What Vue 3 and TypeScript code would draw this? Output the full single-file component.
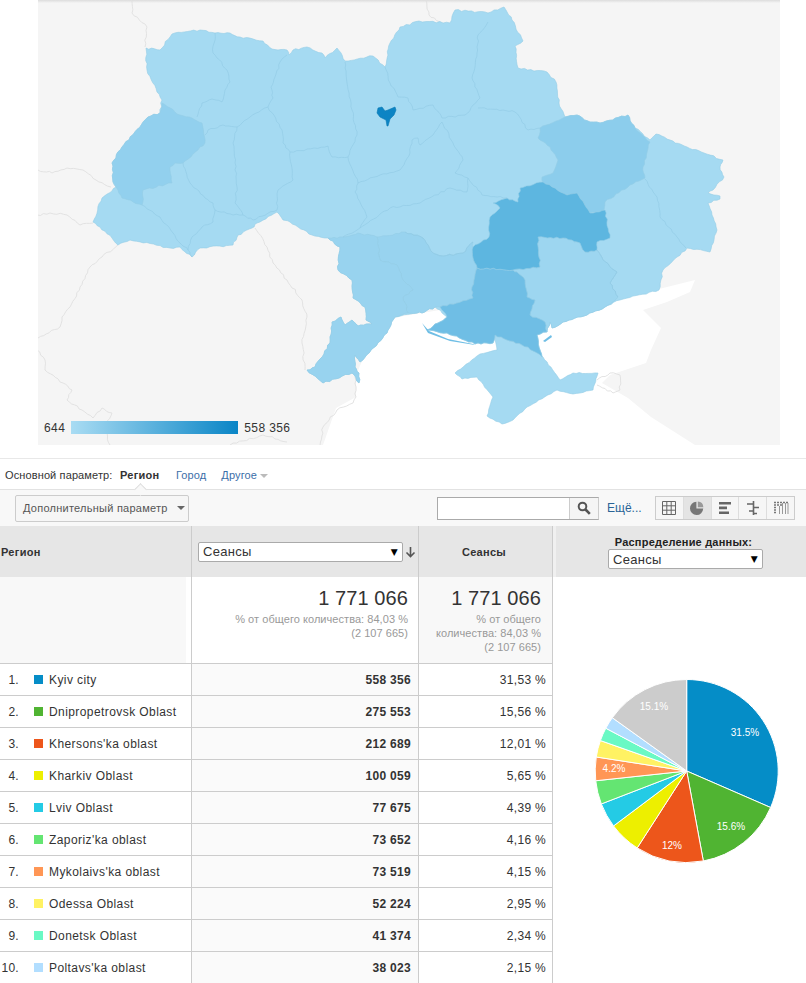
<script setup lang="ts">
type P = [number, number]

function noise(a: number, b: number): number {
  const s = Math.sin(a * 12.9898 + b * 78.233) * 43758.5453
  return (s - Math.floor(s)) * 2 - 1
}

function wiggle(pts: P[], closed: boolean, amp = 0.9): string {
  const list = closed ? [...pts, pts[0]] : pts
  let d = `M${list[0][0]} ${list[0][1]}`
  for (let i = 1; i < list.length; i++) {
    const p = list[i - 1]
    const q = list[i]
    const flip = p[0] > q[0] || (p[0] === q[0] && p[1] > q[1])
    const a = flip ? q : p
    const b = flip ? p : q
    const len = Math.hypot(b[0] - a[0], b[1] - a[1])
    const n = Math.min(14, Math.floor(len / 3.5))
    const mids: P[] = []
    for (let k = 1; k <= n; k++) {
      const t = k / (n + 1)
      const o = noise(a[0] + k * 3.1, b[1] + a[1] + k) * amp
      mids.push([
        +(a[0] + (b[0] - a[0]) * t - ((b[1] - a[1]) / len) * o).toFixed(1),
        +(a[1] + (b[1] - a[1]) * t + ((b[0] - a[0]) / len) * o).toFixed(1),
      ])
    }
    if (flip) mids.reverse()
    for (const m of mids) d += `L${m[0]} ${m[1]}`
    d += `L${q[0]} ${q[1]}`
  }
  return closed ? d + 'Z' : d
}

const outer: P[] = [[146,48],[160,50],[172,34],[200,30],[215,33],[230,33],[240,37],[263,41],[272,49],[287,50],[289,55],[293,50],[307,47],[322,53],[325,58],[337,48],[345,61],[373,56],[385,67],[390,43],[400,27],[419,21],[450,23],[455,10],[488,13],[504,7],[512,20],[523,41],[515,46],[518,68],[547,72],[556,82],[559,103],[565,117],[577,115],[590,122],[600,123],[628,115],[635,128],[650,140],[656,134],[670,140],[687,147],[704,153],[723,160],[720,167],[724,177],[713,190],[708,193],[720,196],[720,199],[708,203],[712,215],[717,230],[710,252],[687,248],[677,257],[663,270],[659,290],[620,300],[605,307],[587,315],[563,322],[552,328],[550,322],[547,332],[537,335],[542,357],[528,347],[507,340],[495,335],[493,343],[475,344],[447,333],[427,330],[438,323],[447,317],[435,307],[422,313],[417,313],[395,317],[387,333],[360,362],[355,355],[355,367],[359,373],[359,383],[352,373],[323,383],[307,370],[315,367],[330,343],[332,322],[341,317],[345,325],[352,320],[358,326],[372,324],[366,320],[365,307],[353,298],[352,280],[338,270],[340,247],[328,238],[312,235],[290,222],[283,220],[277,212],[257,223],[252,228],[238,235],[233,245],[200,248],[192,257],[180,247],[170,248],[130,240],[118,245],[112,238],[100,227],[93,222],[102,198],[116,187],[113,182],[112,163],[122,147],[148,117],[160,113],[162,100],[157,92],[147,70]]

const crimea: P[] = [[495,335],[497,350],[480,354],[455,373],[462,379],[477,377],[493,397],[487,416],[502,424],[513,420],[527,407],[557,390],[573,394],[593,390],[598,373],[573,373],[560,380],[543,357],[528,347],[507,340]]

const regions: { pts: P[]; fill: string }[] = [
  { fill: '#9dd6f0', pts: [[513,270],[540,267],[538,237],[563,238],[580,243],[585,252],[597,250],[603,260],[617,272],[610,283],[618,297],[605,307],[587,315],[563,322],[552,328],[550,322],[547,332],[545,322],[530,315],[535,300],[527,297],[525,280],[517,272]] },
  { fill: '#98d3ef', pts: [[377,237],[405,232],[423,238],[433,253],[443,256],[463,253],[473,242],[473,258],[477,268],[472,287],[473,298],[440,307],[435,307],[422,313],[417,313],[408,313],[403,297],[413,290],[403,280],[397,265],[380,260]] },
  { fill: '#98d3ef', pts: [[328,238],[343,237],[358,233],[377,237],[380,260],[397,265],[403,280],[413,290],[403,297],[408,313],[395,317],[387,333],[360,362],[355,355],[355,367],[359,373],[359,383],[352,373],[323,383],[307,370],[315,367],[330,343],[332,322],[341,317],[345,325],[352,320],[358,326],[372,324],[366,320],[365,307],[353,298],[352,280],[338,270],[340,247]] },
  { fill: '#92d0ee', pts: [[112,163],[113,182],[118,190],[122,198],[142,205],[143,190],[172,183],[170,167],[175,163],[183,163],[205,143],[202,123],[192,118],[180,115],[162,103],[160,113],[148,117],[122,147]] },
  { fill: '#8ccdec', pts: [[540,128],[565,117],[577,115],[590,122],[600,123],[628,115],[635,128],[650,142],[643,167],[645,178],[630,185],[605,202],[603,212],[590,213],[577,193],[567,195],[543,183],[542,177],[553,173],[558,160],[550,147],[538,138]] },
  { fill: '#6fbee5', pts: [[477,268],[472,287],[473,298],[440,307],[447,317],[438,323],[427,330],[447,333],[475,344],[493,343],[495,335],[507,340],[528,347],[542,357],[537,335],[547,332],[545,322],[530,315],[535,300],[527,297],[525,280],[517,272],[513,270]] },
  { fill: '#5db6e0', pts: [[543,182],[520,188],[518,202],[507,198],[493,203],[500,208],[490,217],[489,237],[473,247],[473,258],[477,268],[513,270],[540,267],[538,237],[563,238],[580,243],[585,252],[597,250],[597,242],[610,238],[605,210],[590,213],[577,193],[567,195]] },
]

const borders: P[][] = [
  [[215,33],[213,53],[227,70],[230,82],[225,90],[222,102],[212,99],[202,103],[197,117]],
  [[287,55],[280,62],[275,77],[271,87],[273,98],[268,107]],
  [[268,107],[250,117],[237,127],[223,125],[208,130],[205,135]],
  [[237,127],[233,143],[235,163],[237,187],[235,203],[243,215]],
  [[183,163],[190,183],[205,198],[213,203],[215,210],[233,215],[243,215]],
  [[215,210],[213,222],[202,227],[192,237],[188,250],[192,257]],
  [[142,205],[160,217],[173,233],[180,243],[188,250]],
  [[243,215],[253,220],[277,210]],
  [[268,107],[282,130],[283,143],[290,152],[293,180],[278,190],[277,210]],
  [[290,152],[328,146],[332,157],[348,157]],
  [[345,62],[347,83],[352,110],[357,135],[348,157],[358,183]],
  [[358,183],[355,192],[367,217],[360,228],[343,237]],
  [[358,183],[380,175],[400,170],[410,153],[412,140],[418,138],[420,145],[433,135],[442,122]],
  [[385,67],[390,83],[398,97],[408,98],[413,110],[433,105],[442,118]],
  [[488,22],[478,35],[477,53],[472,78],[480,98],[465,115],[442,118]],
  [[478,108],[503,110],[515,112],[528,130],[540,128]],
  [[442,122],[453,143],[463,160],[455,173],[468,178],[482,195],[497,197],[507,198]],
  [[360,228],[390,208],[420,203],[450,188],[467,192],[468,178]],
  [[405,232],[423,238],[433,253],[443,256],[463,253],[473,242]],
  [[597,250],[603,260],[617,272],[610,283],[618,297]],
  [[645,179],[657,197],[660,217],[677,237],[686,248]],
]

const neighbours: P[][] = [
  [[132,0],[132,13],[147,27],[145,47]],
  [[426,0],[429,15],[442,23]],
  [[38,170],[52,173],[67,168],[83,170],[96,180],[111,187]],
  [[37,215],[50,213],[67,215],[80,225],[93,223]],
  [[118,245],[102,257],[90,267],[80,287],[70,307],[62,317],[60,327],[38,338]],
  [[37,350],[45,360],[45,370],[63,383],[72,390],[67,400],[82,410],[93,418],[102,408],[112,413],[105,427],[110,445]],
  [[255,228],[267,247],[273,263],[287,280],[302,300],[307,317],[302,343],[305,370]],
  [[355,377],[356,397],[353,403],[337,410],[323,427],[320,445]],
  [[230,445],[263,435],[287,442]],
  [[597,380],[610,373],[620,375],[620,390],[613,393],[597,385]],
]

const seaPath = 'M323 445L336 408L356 397L356 375L380 320L500 300L600 290L659 289L695 280L690 292L667 302L643 310L661 328L651 350L646 363L610 375L602 383L628 398L651 417L695 445Z'
const kyivPath = 'M377 113L378 108L382 107L385 111L388 110L395 107L396 110L394 115L390 119L388 126L387 126L386 120L380 117Z'
const outerPath = wiggle(outer, true)
const crimeaPath = wiggle(crimea, true, 0.5)
const regionPaths = regions.map((r) => ({ fill: r.fill, d: wiggle(r.pts, true) }))
const borderPaths = borders.map((b) => wiggle(b, false))
const neighbourPaths = neighbours.map((b) => wiggle(b, false, 1))

const rows = [
  { name: 'Kyiv city', value: '558 356', pct: '31,53 %', share: 31.53, color: '#058dc7' },
  { name: 'Dnipropetrovsk Oblast', value: '275 553', pct: '15,56 %', share: 15.56, color: '#50b432' },
  { name: "Khersons'ka oblast", value: '212 689', pct: '12,01 %', share: 12.01, color: '#ed561b' },
  { name: 'Kharkiv Oblast', value: '100 059', pct: '5,65 %', share: 5.65, color: '#edef00' },
  { name: 'Lviv Oblast', value: '77 675', pct: '4,39 %', share: 4.39, color: '#24cbe5' },
  { name: "Zaporiz'ka oblast", value: '73 652', pct: '4,16 %', share: 4.16, color: '#64e572' },
  { name: "Mykolaivs'ka oblast", value: '73 519', pct: '4,15 %', share: 4.15, color: '#ff9655' },
  { name: 'Odessa Oblast', value: '52 224', pct: '2,95 %', share: 2.95, color: '#fff263' },
  { name: 'Donetsk Oblast', value: '41 374', pct: '2,34 %', share: 2.34, color: '#6af9c4' },
  { name: "Poltavs'ka oblast", value: '38 023', pct: '2,15 %', share: 2.15, color: '#b2deff' },
]

const cx = 133.7
const cy = 194
const radius = 91.5
let acc = 0
const slices = [...rows.map((r) => ({ share: r.share, color: r.color })), { share: 15.11, color: '#cccccc' }].map((s) => {
  const a0 = (acc / 100) * Math.PI * 2 - Math.PI / 2
  acc += s.share
  const a1 = (acc / 100) * Math.PI * 2 - Math.PI / 2
  const large = s.share > 50 ? 1 : 0
  const d = `M${cx} ${cy}L${(cx + radius * Math.cos(a0)).toFixed(2)} ${(cy + radius * Math.sin(a0)).toFixed(2)}A${radius} ${radius} 0 ${large} 1 ${(cx + radius * Math.cos(a1)).toFixed(2)} ${(cy + radius * Math.sin(a1)).toFixed(2)}Z`
  return { d, color: s.color }
})
const pieLabels = [
  { t: '31.5%', x: 192, y: 159 },
  { t: '15.6%', x: 178, y: 253 },
  { t: '12%', x: 119, y: 272 },
  { t: '4.2%', x: 61, y: 195 },
  { t: '15.1%', x: 101, y: 133 },
]
</script>

<template>
  <div class="page">
    <div class="map">
      <svg class="map-svg" viewBox="38 0 742 445" width="742" height="445">
        <defs>
          <linearGradient id="topShade" x1="0" y1="0" x2="0" y2="1">
            <stop offset="0" stop-color="#dcdcdc" />
            <stop offset="1" stop-color="#f5f5f5" />
          </linearGradient>
        </defs>
        <rect x="38" y="0" width="742" height="445" fill="#f5f5f5" />
        <rect x="38" y="0" width="742" height="3" fill="url(#topShade)" />
        <path :d="seaPath" fill="#ffffff" />
        <path v-for="(d, i) in neighbourPaths" :key="'n' + i" :d="d" class="neighbour" />
        <path :d="outerPath" fill="#a5daf2" class="edge" />
        <path :d="crimeaPath" fill="#a5daf2" class="edge" />
        <path v-for="(r, i) in regionPaths" :key="'r' + i" :d="r.d" :fill="r.fill" class="edge" />
        <path v-for="(d, i) in borderPaths" :key="'b' + i" :d="d" class="inner" />
        <path d="M422 323L429 331L448 339L473 344L475 345L450 341L428 333Z" fill="#6fbee5" />
        <path d="M543 341L551 335L552 337L545 342Z" fill="#6fbee5" />
        <path :d="kyivPath" fill="#0c84c4" stroke="#0a78b4" stroke-width="0.6" />
      </svg>
      <div class="legend">
        <span>644</span>
        <i class="legend-bar"></i>
        <span>558 356</span>
      </div>
    </div>

    <div class="tabs">
      <span class="tabs-label">Основной параметр:</span>
      <span class="tab-active">Регион</span>
      <a class="tab-link">Город</a>
      <a class="tab-link">Другое</a>
      <i class="tab-caret"></i>
    </div>

    <div class="toolbar">
      <div class="extra-btn">
        <span>Дополнительный параметр</span>
        <i class="btn-caret"></i>
      </div>
      <div class="tools">
        <div class="search">
          <div class="search-input"></div>
          <div class="search-btn">
            <svg width="14" height="14" viewBox="0 0 14 14">
              <circle cx="5.5" cy="5.5" r="3.8" fill="none" stroke="#555" stroke-width="2" />
              <path d="M8.5 8.5L12.8 12.8" stroke="#555" stroke-width="2.6" />
            </svg>
          </div>
        </div>
        <a class="more">Ещё...</a>
        <div class="views">
          <div class="view">
            <svg width="14" height="14" viewBox="0 0 14 14">
              <path d="M.5 .5H13.5V13.5H.5ZM.5 4.8H13.5M.5 9.2H13.5M4.8 .5V13.5M9.2 .5V13.5" fill="none" stroke="#666" />
            </svg>
          </div>
          <div class="view active">
            <svg width="14" height="14" viewBox="0 0 14 14">
              <path d="M6.4 .8V7.6H13.2A6.6 6.6 0 1 1 6.4 .8Z" fill="#777" />
              <path d="M7.8 .6A6 6 0 0 1 13.4 6.2H7.8Z" fill="#999" />
            </svg>
          </div>
          <div class="view">
            <svg width="14" height="14" viewBox="0 0 14 14">
              <path d="M1 1H13V3.6H1ZM1 5.6H9V8.2H1ZM1 10.4H11V13H1Z" fill="#666" />
            </svg>
          </div>
          <div class="view">
            <svg width="14" height="14" viewBox="0 0 14 14">
              <path d="M7.5 0V14" stroke="#666" stroke-width="1.6" />
              <path d="M1 3H7M7 6.5H13M3 10H7M7 12.5H11" stroke="#666" stroke-width="1.6" />
            </svg>
          </div>
          <div class="view">
            <svg width="16" height="14" viewBox="0 0 16 14">
              <path d="M1 1.5H15M1 4H9M1 6.5H4M1 9H4M1 11.5H4" stroke="#777" stroke-width="1.4" stroke-dasharray="2 1" />
              <path d="M6.5 5V13M9.5 2V13M12.5 2V13M15 2V13" stroke="#999" stroke-width="1" />
            </svg>
          </div>
        </div>
      </div>
    </div>

    <div class="report">
      <div class="table">
        <div class="row head">
          <div class="c1 head-title">Регион</div>
          <div class="c2 head-select">
            <div class="select wide"><span>Сеансы</span><b>▼</b></div>
            <svg width="11" height="12" viewBox="0 0 11 12" class="sort">
              <path d="M5.5 1V10.5M1.5 6.5L5.5 10.5L9.5 6.5" fill="none" stroke="#555" stroke-width="1.6" />
            </svg>
          </div>
          <div class="c3 head-metric">Сеансы</div>
        </div>
        <div class="row totals">
          <div class="c1 total-blank"></div>
          <div class="c2 total">
            <div class="big">1 771 066</div>
            <div class="sub">% от общего количества: 84,03 %<br />(2 107 665)</div>
          </div>
          <div class="c3 total shaded">
            <div class="big">1 771 066</div>
            <div class="sub">% от общего<br />количества: 84,03 %<br />(2 107 665)</div>
          </div>
        </div>
        <div v-for="(r, i) in rows" :key="r.name" class="row item">
          <div class="c1 name-cell">
            <span class="idx">{{ i + 1 }}.</span>
            <i class="swatch" :style="{ background: r.color }"></i>
            <span class="name">{{ r.name }}</span>
          </div>
          <div class="c2 val">{{ r.value }}</div>
          <div class="c3 pct">{{ r.pct }}</div>
        </div>
      </div>
      <div class="side">
        <div class="side-head">
          <div class="side-title">Распределение данных:</div>
          <div class="select side-select"><span>Сеансы</span><b>▼</b></div>
        </div>
        <svg class="pie" width="253" height="300" viewBox="0 0 253 300">
          <path v-for="(s, i) in slices" :key="i" :d="s.d" :fill="s.color" stroke="#fff" stroke-width="1" />
          <text v-for="l in pieLabels" :key="l.t" :x="l.x" :y="l.y" class="pie-label">{{ l.t }}</text>
        </svg>
      </div>
    </div>
  </div>
</template>

<style scoped>
.page {
  width: 806px;
  height: 983px;
  overflow: hidden;
  background: #fff;
  font-family: "Liberation Sans", Arial, sans-serif;
  color: #333;
}
.map {
  position: relative;
  height: 445px;
  padding-left: 38px;
}
.map-svg {
  display: block;
}
.neighbour {
  fill: none;
  stroke: #e0e0e0;
  stroke-width: 0.9;
  stroke-linejoin: round;
}
.edge {
  stroke: #94cce6;
  stroke-width: 0.6;
  stroke-linejoin: round;
}
.inner {
  fill: none;
  stroke: #90c9e4;
  stroke-width: 0.6;
  stroke-linejoin: round;
}
.legend {
  position: absolute;
  left: 44px;
  top: 421px;
  display: flex;
  align-items: center;
  height: 13px;
  font-size: 12px;
  color: #333;
  letter-spacing: 0.4px;
}
.legend-bar {
  width: 167px;
  height: 13px;
  margin: 0 6px;
  background: linear-gradient(90deg, #a9dcf3, #0a85c6);
}
.tabs {
  margin-top: 13px;
  padding: 2px 0 0 5px;
  box-sizing: border-box;
  height: 32px;
  border-top: 1px solid #e8e8e8;
  border-bottom: 1px solid #e2e2e2;
  display: flex;
  align-items: center;
  font-size: 11px;
  position: relative;
  letter-spacing: 0.12px;
}
.tabs-label {
  width: 115px;
}
.tab-active {
  font-weight: bold;
  width: 56px;
  letter-spacing: 0.25px;
}
.tab-active::after {
  content: "";
  position: absolute;
  left: 136px;
  bottom: -1px;
  width: 8px;
  height: 8px;
  transform: translateY(4px) rotate(45deg);
  background: #f8f8f8;
  border-left: 1px solid #ddd;
  border-top: 1px solid #ddd;
}
.tab-link {
  color: #3b6ea8;
}
.tab-link + .tab-link {
  margin-left: 15px;
}
.tab-caret {
  margin-left: 3px;
  margin-top: 1px;
  border-left: 4px solid transparent;
  border-right: 4px solid transparent;
  border-top: 4px solid #bbb;
}
.toolbar {
  height: 36px;
  background: #f8f8f8;
  display: flex;
  align-items: center;
  justify-content: space-between;
  padding: 0 11px 0 15px;
}
.extra-btn {
  width: 174px;
  height: 27px;
  box-sizing: border-box;
  border: 1px solid #ccc;
  border-radius: 2px;
  background: #f6f6f6;
  display: flex;
  align-items: center;
  padding-left: 7px;
  font-size: 11px;
  color: #555;
  letter-spacing: 0.25px;
}
.btn-caret {
  margin-left: 9px;
  border-left: 4px solid transparent;
  border-right: 4px solid transparent;
  border-top: 4px solid #666;
}
.tools {
  display: flex;
  align-items: center;
}
.search {
  display: flex;
  width: 162px;
  height: 23px;
  box-sizing: border-box;
  border: 1px solid #aaa;
  border-right-color: #ccc;
  background: #fff;
}
.search-input {
  flex: 1;
}
.search-btn {
  width: 28px;
  border-left: 1px solid #ccc;
  background: #f5f5f5;
  display: flex;
  align-items: center;
  justify-content: center;
}
.more {
  margin-left: 8px;
  width: 48px;
  font-size: 12px;
  color: #2a6496;
}
.views {
  display: flex;
  width: 140px;
  height: 24px;
  box-sizing: border-box;
  border: 1px solid #ccc;
  background: #f6f6f6;
}
.view {
  flex: 1;
  display: flex;
  align-items: center;
  justify-content: center;
  border-left: 1px solid #ddd;
}
.view:first-child {
  border-left: 0;
}
.view.active {
  background: #e4e4e4;
}
.report {
  display: flex;
}
.table {
  width: 553px;
  flex: none;
}
.row {
  display: flex;
}
.c1 {
  width: 192px;
  box-sizing: border-box;
  border-right: 1px solid #ccc;
}
.c2 {
  width: 227px;
  box-sizing: border-box;
  border-right: 1px solid #ccc;
}
.c3 {
  width: 134px;
  box-sizing: border-box;
  border-right: 1px solid #ccc;
}
.head {
  height: 51px;
  background: #e6e6e6;
  font-size: 11px;
  font-weight: bold;
  align-items: stretch;
}
.head-title {
  display: flex;
  align-items: center;
  padding-left: 1px;
  letter-spacing: 0.3px;
}
.head-select {
  display: flex;
  align-items: center;
  padding-left: 6px;
  gap: 2px;
}
.select {
  box-sizing: border-box;
  height: 20px;
  background: #fff;
  border: 1px solid #aaa;
  border-radius: 2px;
  display: flex;
  align-items: center;
  justify-content: space-between;
  padding: 0 4px;
  font-size: 13px;
  font-weight: normal;
  color: #333;
  letter-spacing: 0.3px;
}
.select b {
  font-size: 9px;
  font-weight: normal;
  color: #000;
  font-family: "DejaVu Sans", sans-serif;
}
.wide {
  width: 205px;
}
.head-metric {
  display: flex;
  align-items: center;
  justify-content: center;
  padding-right: 3px;
  letter-spacing: 0.3px;
}
.totals {
  height: 86px;
}
.total-blank {
  background: linear-gradient(90deg, #f8f8f8 0, #f8f8f8 186px, #fff 186px);
}
.total {
  text-align: right;
  padding: 11px 10px 0 0;
}
.shaded {
  background: #f8f8f8;
  padding-right: 11px;
}
.big {
  font-size: 20px;
  line-height: 21px;
  letter-spacing: 0.1px;
}
.sub {
  font-size: 11px;
  line-height: 14px;
  color: #999;
  margin-top: 3px;
  letter-spacing: 0.05px;
}
.item {
  height: 32px;
  font-size: 12px;
  box-sizing: border-box;
  border-top: 1px solid #ccc;
  letter-spacing: 0.3px;
}
.name-cell {
  display: flex;
  align-items: center;
}
.idx {
  width: 19px;
  text-align: right;
}
.swatch {
  margin-left: 15px;
  width: 9px;
  height: 9px;
  flex: none;
}
.name {
  margin-left: 6px;
  white-space: nowrap;
  letter-spacing: 0.42px;
}
.val {
  background: #fafafa;
  display: flex;
  align-items: center;
  justify-content: flex-end;
  padding-right: 7px;
  font-weight: bold;
}
.pct {
  display: flex;
  align-items: center;
  justify-content: flex-end;
  padding-right: 6px;
}
.side {
  flex: 1;
  min-width: 0;
}
.side-head {
  height: 51px;
  background: #e6e6e6;
  border-left: 3px solid #f0f0f0;
  display: flex;
  flex-direction: column;
  align-items: center;
  padding: 10px 0 0 5px;
  box-sizing: border-box;
}
.side-title {
  font-size: 11px;
  font-weight: bold;
  line-height: 12px;
  letter-spacing: 0.2px;
  color: #222;
}
.side-select {
  width: 155px;
  margin-top: 1px;
  margin-left: 4px;
}
.pie {
  display: block;
}
.pie-label {
  fill: #fff;
  font-size: 10px;
  text-anchor: middle;
  font-family: "Liberation Sans", Arial, sans-serif;
}
</style>
